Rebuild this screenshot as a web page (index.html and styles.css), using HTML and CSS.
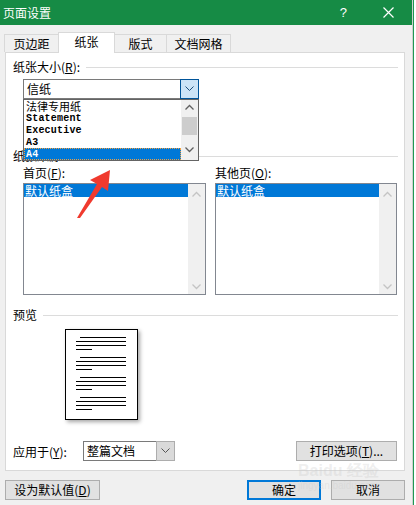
FILE: index.html
```html
<!DOCTYPE html>
<html>
  <head>
    <meta charset="UTF-8">
    <title>页面设置</title>
    <link rel="stylesheet" href="styles.css">
  </head>
  <body>
    <div class="screen">
      <div class="dialog">
        <div class="titlebar">
          <span class="title">页面设置</span>
          <span class="help">?</span>
          <svg class="close" width="11" height="11" viewBox="0 0 11 11">
            <path d="M0.5 0.5 L10.5 10.5 M10.5 0.5 L0.5 10.5" stroke="#fff" stroke-width="1.2" fill="none"/>
          </svg>
        </div>

        <div class="tabs">
          <div class="tab tab-1">页边距</div>
          <div class="tab tab-2 active">纸张</div>
          <div class="tab tab-3">版式</div>
          <div class="tab tab-4">文档网格</div>
        </div>

        <div class="panel">
          <div class="section">
            <span>纸张大小(<u>R</u>):</span>
            <div class="rule"></div>
          </div>

          <div class="combo size-combo">
            <span class="combo-text">信纸</span>
            <div class="combo-btn open">
              <svg width="9" height="6" viewBox="0 0 9 6"><path d="M0.5 0.5 L4.5 4.5 L8.5 0.5" stroke="#1f4f7a" fill="none"/></svg>
            </div>

            <!-- open dropdown list -->
            <div class="droplist">
              <div class="items">
                <div class="item cjk">法律专用纸</div>
                <div class="item mono">Statement</div>
                <div class="item mono">Executive</div>
                <div class="item mono">A3</div>
                <div class="item mono selected">A4</div>
              </div>
              <div class="vscroll">
                <svg width="9" height="6" viewBox="0 0 9 6"><path d="M0.5 5.5 L4.5 1.5 L8.5 5.5" stroke="#606060" stroke-width="1.3" fill="none"/></svg>
                <div class="thumb"></div>
                <svg width="9" height="6" viewBox="0 0 9 6"><path d="M0.5 0.5 L4.5 4.5 L8.5 0.5" stroke="#606060" stroke-width="1.3" fill="none"/></svg>
              </div>
            </div>
          </div>

          <div class="section source">
            <span>纸张来源</span>
            <div class="rule"></div>
          </div>

          <div class="trays">
            <div class="tray">
              <div class="tray-label">首页(<u>F</u>):</div>
              <div class="listbox">
                <div class="list-items"><div class="list-sel">默认纸盒</div></div>
                <div class="list-scroll">
                  <svg width="9" height="6" viewBox="0 0 9 6"><path d="M0.5 5.5 L4.5 1.5 L8.5 5.5" stroke="#c4c4c4" stroke-width="1.3" fill="none"/></svg>
                  <svg width="9" height="6" viewBox="0 0 9 6"><path d="M0.5 0.5 L4.5 4.5 L8.5 0.5" stroke="#c4c4c4" stroke-width="1.3" fill="none"/></svg>
                </div>
              </div>
            </div>
            <div class="tray">
              <div class="tray-label">其他页(<u>O</u>):</div>
              <div class="listbox">
                <div class="list-items"><div class="list-sel">默认纸盒</div></div>
                <div class="list-scroll">
                  <svg width="9" height="6" viewBox="0 0 9 6"><path d="M0.5 5.5 L4.5 1.5 L8.5 5.5" stroke="#c4c4c4" stroke-width="1.3" fill="none"/></svg>
                  <svg width="9" height="6" viewBox="0 0 9 6"><path d="M0.5 0.5 L4.5 4.5 L8.5 0.5" stroke="#c4c4c4" stroke-width="1.3" fill="none"/></svg>
                </div>
              </div>
            </div>
          </div>

          <div class="section preview-head">
            <span>预览</span>
            <div class="rule"></div>
          </div>

          <div class="page">
            <svg width="71" height="89" viewBox="0 0 71 89">
              <g stroke="#000" stroke-width="1">
                <path d="M14 7.5 H60 M10 11.5 H60 M10 15.5 H60 M10 19.5 H26"/>
                <path d="M14 27.5 H60 M10 31.5 H60 M10 35.5 H60 M10 39.5 H26"/>
                <path d="M14 47.5 H60 M10 51.5 H60 M10 55.5 H60 M10 59.5 H26"/>
                <path d="M14 67.5 H60 M10 71.5 H60 M10 75.5 H60 M10 79.5 H26"/>
              </g>
            </svg>
          </div>

          <div class="apply-row">
            <span class="apply-label">应用于(<u>Y</u>):</span>
            <div class="combo apply-combo">
              <span class="combo-text">整篇文档</span>
              <div class="combo-btn">
                <svg width="9" height="6" viewBox="0 0 9 6"><path d="M0.5 0.5 L4.5 4.5 L8.5 0.5" stroke="#555" fill="none"/></svg>
              </div>
            </div>
            <button class="btn print-btn">打印选项(<u>T</u>)...</button>
          </div>

          <!-- red annotation arrow drawn over the dialog -->
          <svg class="annot" width="40" height="52" viewBox="0 0 40 52">
            <polygon points="33,0 13,10 20,14 0,48 3,48 25,17 31,21" fill="#f03a2e"/>
          </svg>
        </div>

        <div class="footer">
          <button class="btn default-btn">设为默认值(<u>D</u>)</button>
          <div class="spacer"></div>
          <button class="btn ok-btn">确定</button>
          <button class="btn cancel-btn">取消</button>
        </div>

        <div class="watermark">
          <div class="wm-big">Bai<span>du</span> 经验</div>
          <div class="wm-small">jingyan.baidu.com</div>
        </div>
      </div>
      <div class="behind"></div>
    </div>
  </body>
</html>
```

FILE: styles.css
```css
body {
  margin: 0;
  font-family: "Noto Sans CJK SC", "Liberation Sans", sans-serif;
  font-size: 12px;
  color: #000;
  background: #fff;
}

.screen {
  display: flex;
  width: 416px;
  height: 505px;
  overflow: hidden;
}

.dialog {
  position: relative;
  width: 412px;
  height: 505px;
  background: #f0f0f0;
  border-right: 1px solid #cfcfcf;
  flex: none;
}

.behind {
  width: 3px;
  border-left: 1px solid #1e9a52;
  background: #fff;
}

/* title bar */
.titlebar {
  display: flex;
  align-items: center;
  height: 25px;
  background: #168b45;
  color: #fff;
}

.title {
  padding-left: 3px;
  font-size: 12px;
  line-height: 14px;
}

.help {
  margin-left: auto;
  margin-right: 36px;
  font-family: "Liberation Sans", sans-serif;
  font-size: 13px;
}

.close {
  margin-right: 18px;
}

/* tabs */
.tabs {
  display: flex;
  align-items: flex-end;
  height: 20px;
  margin-top: 7px;
  padding-left: 4px;
}

.tab {
  height: 18px;
  box-sizing: border-box;
  border: 1px solid #d9d9d9;
  border-bottom: none;
  background: #f0f0f0;
  text-align: center;
  line-height: 17px;
  margin-right: -1px;
}

.tab-1 { width: 55px; }
.tab-2 { width: 57px; }
.tab-3 { width: 53px; }
.tab-4 { width: 65px; }

.tab.active {
  position: relative;
  z-index: 1;
  height: 21px;
  margin-bottom: -1px;
  background: #fff;
  line-height: 18px;
}

/* panel */
.panel {
  position: relative;
  box-sizing: border-box;
  width: 400px;
  height: 419px;
  margin-left: 5px;
  padding: 7px 6px 0 7px;
  background: #fff;
  border: 1px solid #d9d9d9;
}

.section {
  display: flex;
  align-items: center;
  height: 14px;
  line-height: 14px;
}

.section .rule {
  flex: 1;
  height: 1px;
  margin-left: 6px;
  background: #dcdcdc;
}

.combo {
  position: relative;
  display: flex;
  box-sizing: border-box;
  height: 20px;
  border: 1px solid #7a7a7a;
  background: #fff;
}

.combo-text {
  flex: 1;
  padding-left: 3px;
  line-height: 18px;
}

.combo-btn {
  display: flex;
  align-items: center;
  justify-content: center;
  width: 17px;
  margin: -1px -1px -1px 0;
  background: #dadada;
  border: 1px solid #adadad;
}

.combo-btn.open {
  background: #cce4f7;
  border-color: #005499;
}

.size-combo {
  width: 176px;
  margin: 5px 0 0 10px;
}

/* dropdown popup */
.droplist {
  position: absolute;
  z-index: 2;
  top: 19px;
  left: -1px;
  display: flex;
  box-sizing: border-box;
  width: 176px;
  height: 62px;
  border: 1px solid #646464;
  background: #fff;
}

.items {
  flex: 1;
}

.item {
  height: 12px;
  padding-left: 2px;
  line-height: 12px;
  white-space: nowrap;
}

.item.cjk {
  font-size: 11px;
  line-height: 12px;
}

.item.mono {
  font-family: "Liberation Mono", monospace;
  font-size: 10px;
  font-weight: bold;
  letter-spacing: 0.2px;
  line-height: 13px;
}

.item.selected {
  background: #0078d7;
  color: #fff;
  outline: 1px dotted #f0a040;
  outline-offset: -1px;
}

.vscroll {
  display: flex;
  flex-direction: column;
  align-items: center;
  width: 17px;
  background: #f0f0f0;
  padding-top: 4px;
  box-sizing: border-box;
}

.vscroll .thumb {
  width: 15px;
  height: 18px;
  margin: 7px 0 12px;
  background: #cdcdcd;
}

.source {
  margin-top: 50px;
}

/* paper trays */
.trays {
  display: grid;
  grid-template-columns: 183px 182px;
  column-gap: 9px;
  margin: 3px 0 0 10px;
}

.tray-label {
  height: 14px;
  line-height: 14px;
  margin-bottom: 3px;
}

.listbox {
  display: flex;
  box-sizing: border-box;
  height: 112px;
  border: 1px solid #828790;
}

.list-items {
  flex: 1;
}

.list-sel {
  height: 13px;
  padding-left: 1px;
  line-height: 13px;
  background: #0078d7;
  color: #fff;
}

.list-scroll {
  display: flex;
  flex-direction: column;
  align-items: center;
  justify-content: space-between;
  width: 17px;
  padding: 7px 0 4px;
  background: #f0f0f0;
}

.preview-head {
  margin-top: 13px;
}

.page {
  width: 71px;
  height: 89px;
  margin: 7px 0 0 52px;
  border: 1px solid #000;
  background: #fff;
  box-shadow: 2px 2px 4px rgba(0, 0, 0, 0.35);
}

.page svg {
  display: block;
}

/* apply to */
.apply-row {
  display: flex;
  align-items: center;
  margin-top: 21px;
}

.apply-label {
  width: 70px;
}

.apply-combo {
  width: 92px;
}

.btn {
  box-sizing: border-box;
  height: 20px;
  padding: 0;
  font-family: "Noto Sans CJK SC", "Liberation Sans", sans-serif;
  font-size: 12px;
  line-height: 18px;
  color: #000;
  background: #e1e1e1;
  border: 1px solid #adadad;
}

.print-btn {
  width: 101px;
  margin-left: auto;
  margin-right: 1px;
}

.annot {
  position: absolute;
  left: 71px;
  top: 117px;
}

/* footer */
.footer {
  display: flex;
  margin: 9px 7px 0 5px;
}

.spacer {
  flex: 1;
}

.default-btn {
  width: 95px;
}

.ok-btn {
  width: 74px;
  border: 2px solid #0078d7;
  line-height: 16px;
  margin-right: 10px;
}

.cancel-btn {
  width: 74px;
}

/* faint image watermark */
.watermark {
  position: absolute;
  left: 298px;
  top: 462px;
  color: rgba(200, 200, 200, 0.3);
  font-family: "Liberation Sans", sans-serif;
  pointer-events: none;
}

.wm-big {
  font-size: 16px;
  font-weight: bold;
  line-height: 18px;
}

.wm-small {
  font-size: 10px;
  line-height: 12px;
}
```
